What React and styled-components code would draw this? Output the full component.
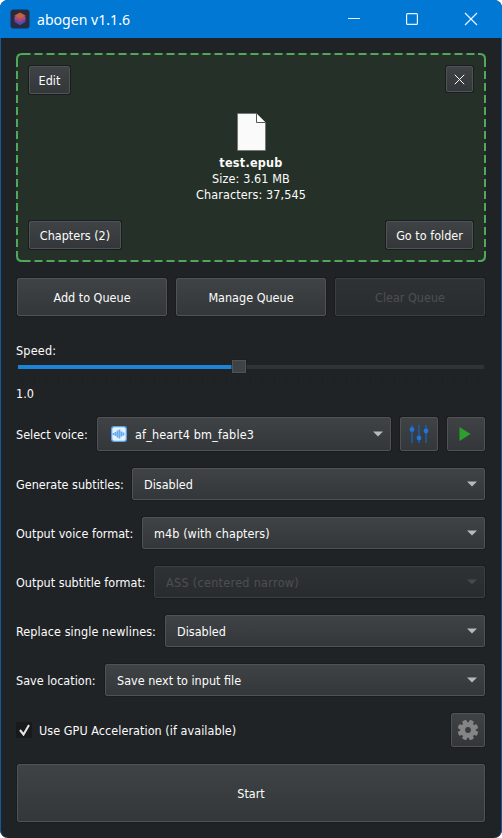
import React from "react";
import styled, { createGlobalStyle } from "styled-components";

const colors = {
  blue: "#0078d4",
  window: "#202326",
  green: "#50a858",
  text: "#fcfcfc",
};

const ticks = Array.from({ length: 39 }, (_, i) => 5 + i * 12);

const DashedFrame = () => (
  <Frame width="470" height="209" fill="none" stroke={colors.green}>
    <path
      d="M7 1H463M7 208H463"
      strokeWidth="2"
      strokeDasharray="8 4"
      strokeDashoffset="0.5"
    />
    <path
      d="M1 7V202M469 7V202"
      strokeWidth="2"
      strokeDasharray="8 4"
      strokeDashoffset="1"
    />
    <path
      d="M1 9V6Q1 1 6 1H8M462 1H464Q469 1 469 6V9M469 200V203Q469 208 464 208H462M8 208H6Q1 208 1 203V200"
      strokeWidth="2"
    />
  </Frame>
);

const AppLogo = () => (
  <svg width="20" height="20" viewBox="0 0 20 20">
    <rect x="0.5" y="0.5" width="19" height="19" rx="3" fill="#292b40" />
    <path d="M4.5 11.5 10 10.5 15.5 11.5V13L10 16.3 4.5 13Z" fill="#3f4fb4" />
    <path d="M4.5 9 10 8 15.5 9V11.6L10 14.6 4.5 11.6Z" fill="#7d4494" />
    <path d="M4.5 7.5 10 6 15.5 7.5V9.6L10 12.5 4.5 9.6Z" fill="#b04a74" />
    <path d="M4.5 6.5 10 3.6 15.5 6.5 10 9.8Z" fill="#c0653f" />
  </svg>
);

const Gear = () => (
  <svg width="22" height="22" viewBox="-11 -11 22 22">
    <g fill="#858585">
      {[0, 45, 90, 135].map((a) => (
        <rect
          key={a}
          x="-2.3"
          y="-10.3"
          width="4.6"
          height="20.6"
          rx="1.2"
          transform={`rotate(${a + 22.5})`}
        />
      ))}
      <circle r="7.8" />
    </g>
    <circle r="2.9" fill="#393c3f" />
  </svg>
);

const Select = ({ value, disabled, icon, spacing }) => (
  <SelectBox disabled={disabled}>
    {icon}
    <Text $spacing={spacing}>{value}</Text>
    <Arrow width="10" height="6" viewBox="0 0 10 6">
      <path d="M0 0.5H10L5 5.5Z" fill={disabled ? "#45494c" : "#b7babc"} />
    </Arrow>
  </SelectBox>
);

const App = () => (
  <>
    <GlobalStyle />
    <Window>
      <TitleBar>
        <AppLogo />
        <Title>abogen v1.1.6</Title>
        <Controls width="132" height="14" fill="none" stroke="#e9f5ff">
          <path d="M0 6.5H12" strokeWidth="1.1" />
          <rect x="58.6" y="1.6" width="10.8" height="10.8" rx="1" strokeWidth="1.2" />
          <path d="M117 1 129 13M129 1 117 13" strokeWidth="1.2" />
        </Controls>
      </TitleBar>
      <Body>
        <DropZone>
          <DashedFrame />
          <ZoneRow>
            <SmallButton $w={41}>Edit</SmallButton>
            <SmallButton $w={27} $h={26}>
              <svg width="11" height="11" stroke="#fcfcfc" fill="none">
                <path d="M0.8 0.8 10.2 10.2M10.2 0.8 0.8 10.2" />
              </svg>
            </SmallButton>
          </ZoneRow>
          <FileInfo>
            <svg width="29" height="38" viewBox="0 0 29 38">
              <path
                d="M0.5 0.5H19.5L28.5 9.5V37.5H0.5Z"
                fill="#fafafa"
                stroke="#656565"
                strokeWidth="0.6"
              />
              <path d="M19.5 0.5V9.5H28.5" fill="#fff" stroke="#555" />
            </svg>
            <FileName $spacing={0.25}>test.epub</FileName>
            <Text $spacing={0.1}>Size: 3.61 MB</Text>
            <Text $spacing={0.1}>Characters: 37,545</Text>
          </FileInfo>
          <BottomRow>
            <SmallButton $w={92}>Chapters (2)</SmallButton>
            <SmallButton $w={87}>Go to folder</SmallButton>
          </BottomRow>
        </DropZone>

        <QueueRow>
          <Button>Add to Queue</Button>
          <Button>Manage Queue</Button>
          <Button disabled>Clear Queue</Button>
        </QueueRow>

        <Speed>
          <Text $spacing={0.2}>Speed:</Text>
          <Slider width="468" height="28" viewBox="0 0 468 28">
            <rect x="1" y="6" width="466" height="4" rx="1" fill="#313437" />
            <rect x="1" y="6" width="215" height="4" fill="#1d83d6" />
            {ticks.map((x) => (
              <path key={x} d={`M${x + 0.5} 17V24`} stroke="#1d2023" />
            ))}
            <rect x="214.5" y="0.5" width="15" height="14" fill="#1b1d1f" />
            <rect x="215.5" y="1.5" width="13" height="12" fill="#404346" stroke="#505356" />
          </Slider>
          <Text>1.0</Text>
        </Speed>

        <Row $h={34}>
          <Label $w={72}>Select voice:</Label>
          <Select
            value="af_heart4 bm_fable3"
            spacing={0.16}
            icon={
              <VoiceIcon width="16" height="16" viewBox="0 0 16 16">
                <rect width="16" height="16" rx="3" fill="#5b9fe8" />
                <rect x="1.3" y="1.3" width="13.4" height="13.4" rx="2" fill="#e6f2ff" />
                <path
                  d="M2.5 7V9M4.5 6V10M6.5 4.5V11.5M8.5 3.5V12.5M10.5 5.5V10.5M12.5 6.5V9.5"
                  stroke="#65a9ef"
                  strokeWidth="1.7"
                />
              </VoiceIcon>
            }
          />
          <IconButton $w={38}>
            <svg width="20" height="20" viewBox="0 0 20 20" fill="#1d75d8">
              <path d="M3 1V19M10 1V19M17 1V19" stroke="#1c5da6" strokeWidth="1.6" />
              <circle cx="3" cy="5.5" r="2.4" />
              <circle cx="10" cy="14" r="2.4" />
              <circle cx="17" cy="7" r="2.4" />
            </svg>
          </IconButton>
          <IconButton $w={38}>
            <PlayIcon width="12" height="14" viewBox="0 0 12 14">
              <path d="M0.5 0 11.5 7 0.5 14Z" fill="#2ca02c" />
            </PlayIcon>
          </IconButton>
        </Row>
        <Row>
          <Label $w={107}>Generate subtitles:</Label>
          <Select value="Disabled" />
        </Row>
        <Row>
          <Label $w={117}>Output voice format:</Label>
          <Select value="m4b (with chapters)" spacing={0.08} />
        </Row>
        <Row>
          <Label $w={129}>Output subtitle format:</Label>
          <Select value="ASS (centered narrow)" disabled spacing={0.3} />
        </Row>
        <Row>
          <Label $w={140} $spacing={0.08}>
            Replace single newlines:
          </Label>
          <Select value="Disabled" />
        </Row>
        <Row>
          <Label $w={80}>Save location:</Label>
          <Select value="Save next to input file" />
        </Row>
        <Row $h={34}>
          <CheckBox>
            <svg width="11" height="12" viewBox="0 0 11 12" fill="none">
              <path d="M1 6 4.5 10.5 10 1" stroke="#e4e4e4" strokeWidth="2.1" />
            </svg>
          </CheckBox>
          <CheckLabel $spacing={0.05}>Use GPU Acceleration (if available)</CheckLabel>
          <IconButton $w={34}>
            <Gear />
          </IconButton>
        </Row>
        <StartButton>Start</StartButton>
      </Body>
    </Window>
  </>
);

export default App;

const GlobalStyle = createGlobalStyle`
  body {
    margin: 0;
    background: #fff;
    color: ${colors.text};
    font: 12.5px/16px "DejaVu Sans Condensed", "DejaVu Sans", sans-serif;
    font-stretch: condensed;
  }

  * {
    box-sizing: border-box;
  }
`;

const Window = styled.div`
  width: 502px;
  height: 838px;
  overflow: hidden;
  border-radius: 8px;
  background: ${colors.window};
`;

const TitleBar = styled.div`
  display: flex;
  align-items: center;
  height: 38px;
  padding: 0 22px 0 10px;
  background: ${colors.blue};
`;

const Title = styled.div`
  margin: 1px 0 0 7px;
  font: 14.1px/20px "Noto Sans", sans-serif;
  color: #fff;
`;

const Controls = styled.svg`
  margin-left: auto;
`;

const Body = styled.div`
  display: flex;
  flex-direction: column;
  height: 800px;
  padding: 15px 15px 0;
  border: solid #155a96;
  border-width: 0 1px;
  border-radius: 0 0 8px 8px;
`;

const DropZone = styled.div`
  position: relative;
  display: flex;
  flex-direction: column;
  flex: none;
  height: 209px;
  padding: 13px;
  border-radius: 5px;
  background: #253028;
`;

const Frame = styled.svg`
  position: absolute;
  top: 0;
  left: 0;
`;

const ZoneRow = styled.div`
  display: flex;
  justify-content: space-between;
  height: 28px;
`;

const BottomRow = styled(ZoneRow)`
  margin-top: auto;
`;

const FileInfo = styled.div`
  display: flex;
  flex-direction: column;
  align-items: center;
  margin-top: 19px;
`;

const Text = styled.span`
  letter-spacing: ${(p) => p.$spacing || 0}px;
  white-space: nowrap;
`;

const FileName = styled(Text)`
  margin-top: 4px;
  font-weight: 700;
`;

const Button = styled.button`
  display: flex;
  align-items: center;
  justify-content: center;
  flex: 1;
  padding: 1px 0 0;
  border: 1px solid #505356;
  border-radius: 2px;
  box-shadow: 0 0 0 1px #1a1c1e;
  background: linear-gradient(#404346, #343739);
  color: ${colors.text};
  font: inherit;
  white-space: nowrap;

  &:disabled {
    border-color: #3c3f42;
    background: linear-gradient(#2f3235, #292c2e);
    color: #4c4f52;
  }
`;

const SmallButton = styled(Button)`
  flex: none;
  width: ${(p) => p.$w}px;
  height: ${(p) => p.$h || 28}px;
`;

const IconButton = styled(Button)`
  flex: none;
  width: ${(p) => p.$w}px;
  padding: 0;
`;

const QueueRow = styled.div`
  display: flex;
  gap: 9px;
  height: 38px;
  margin: 16px 1px 0;
`;

const Speed = styled.div`
  display: flex;
  flex-direction: column;
  height: 74px;
  margin-top: 27px;
`;

const Slider = styled.svg`
  margin: 0 0 -1px 1px;
`;

const Row = styled.div`
  display: flex;
  gap: 9px;
  height: ${(p) => p.$h || 32}px;
  margin: 0 1px 17px 0;
`;

const Label = styled.div`
  flex: none;
  align-self: center;
  width: ${(p) => p.$w}px;
  padding-top: 1px;
  letter-spacing: ${(p) => p.$spacing || 0}px;
  white-space: nowrap;
`;

const SelectBox = styled(Button)`
  justify-content: flex-start;
  padding: 1px 7px 0 11px;
`;

const Arrow = styled.svg`
  margin: 0 0.5px 1px auto;
`;

const VoiceIcon = styled.svg`
  margin: 0 8px 2px 2px;
`;

const PlayIcon = styled.svg`
  margin: 0 0 1px -2px;
`;

const CheckBox = styled.div`
  display: flex;
  align-items: center;
  justify-content: center;
  align-self: center;
  width: 16px;
  height: 16px;
  background: #17191b;
`;

const CheckLabel = styled(Text)`
  align-self: center;
  margin: 1px auto 0 -2px;
`;

const StartButton = styled(Button)`
  flex: none;
  height: 58px;
  margin: 0 1px;
`;
